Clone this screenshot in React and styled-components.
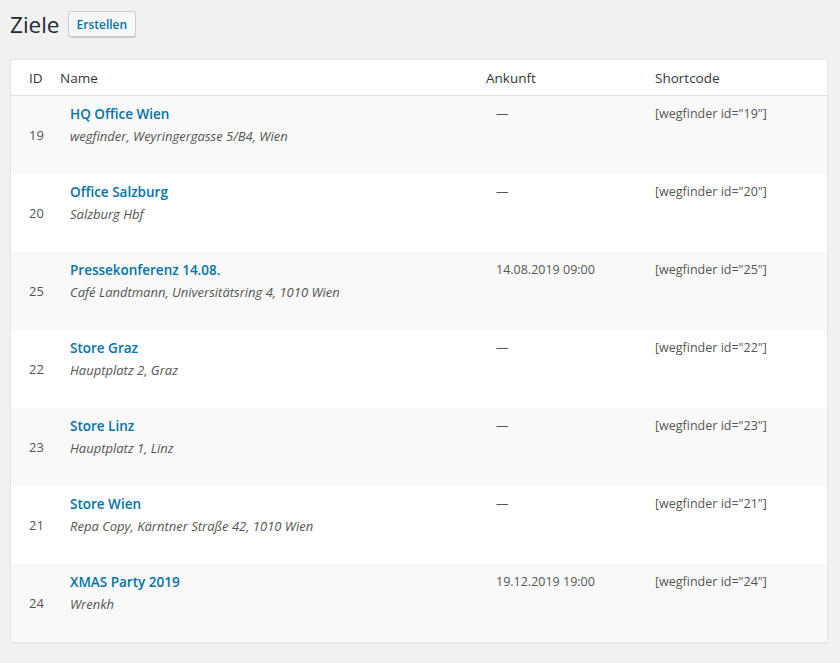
import styled, { createGlobalStyle } from "styled-components";

const rows = [
  { id: 19, name: "HQ Office Wien", place: "wegfinder, Weyringergasse 5/B4, Wien", arrival: "—" },
  { id: 20, name: "Office Salzburg", place: "Salzburg Hbf", arrival: "—" },
  { id: 25, name: "Pressekonferenz 14.08.", place: "Café Landtmann, Universitätsring 4, 1010 Wien", arrival: "14.08.2019 09:00" },
  { id: 22, name: "Store Graz", place: "Hauptplatz 2, Graz", arrival: "—" },
  { id: 23, name: "Store Linz", place: "Hauptplatz 1, Linz", arrival: "—" },
  { id: 21, name: "Store Wien", place: "Repa Copy, Kärntner Straße 42, 1010 Wien", arrival: "—" },
  { id: 24, name: "XMAS Party 2019", place: "Wrenkh", arrival: "19.12.2019 19:00" },
];

const App = () => {
  return (
    <>
      <Global />
      <Wrap>
        <Heading>
          <Title>Ziele</Title>
          <Button>Erstellen</Button>
        </Heading>
        <Table>
          <HeadRow>
            <HeadCell pad={18}>ID</HeadCell>
            <HeadCell>Name</HeadCell>
            <HeadCell>Ankunft</HeadCell>
            <HeadCell>Shortcode</HeadCell>
          </HeadRow>
          {rows.map((r, i) => (
            <Row key={r.id} striped={i % 2 === 0}>
              <IdCell>{r.id}</IdCell>
              <NameCell>
                <Link>{r.name}</Link>
                <Place>{r.place}</Place>
              </NameCell>
              <Cell pad={20}>{r.arrival}</Cell>
              <Cell>[wegfinder id="{r.id}"]</Cell>
            </Row>
          ))}
        </Table>
      </Wrap>
    </>
  );
};
export default App;

const Global = createGlobalStyle`
  body {
    margin: 0;
    background: #f1f1f1;
    font-family: "Open Sans", "Noto Sans", sans-serif;
    color: #444;
  }
`;

const Wrap = styled.div`
  padding: 0 12px 20px 10px;
`;

const Heading = styled.div`
  display: flex;
  align-items: center;
  gap: 8px;
  height: 48px;
  margin-bottom: 11px;
`;

const Title = styled.h1`
  margin: 0;
  font-size: 22.5px;
  font-weight: 400;
  color: #23282d;
  line-height: 29px;
`;

const Button = styled.button`
  height: 26px;
  padding: 0 8px;
  border: 1px solid #ccc;
  border-radius: 3px;
  background: #f7f7f7;
  box-shadow: 0 1px 0 #ccc;
  color: #0073aa;
  font-family: inherit;
  font-size: 12px;
  font-weight: 600;
  cursor: pointer;
`;

const Table = styled.div`
  background: #fff;
  border: 1px solid #e5e5e5;
  box-shadow: 0 1px 1px rgba(0, 0, 0, 0.04);
`;

const grid = `
  display: grid;
  grid-template-columns: 39px 426px 169px 1fr;
`;

const HeadRow = styled.div`
  ${grid}
  height: 35px;
  align-items: center;
  border-bottom: 1px solid #e1e1e1;
`;

const HeadCell = styled.div`
  padding-left: ${({ pad }) => pad || 10}px;
  font-size: 13.5px;
  color: #32373c;
`;

const Row = styled.div`
  ${grid}
  height: 78px;
  background: ${({ striped }) => (striped ? "#f9f9f9" : "#fff")};
`;

const Cell = styled.div`
  padding: 9px 0 0 ${({ pad }) => pad || 10}px;
  font-size: 12.5px;
  line-height: 18px;
  color: #555;
`;

const IdCell = styled.div`
  display: flex;
  align-items: center;
  padding-left: 18px;
  font-size: 13px;
  color: #555;
`;

const NameCell = styled.div`
  padding: 8px 0 0 20px;
`;

const Link = styled.div`
  font-size: 13.5px;
  font-weight: 600;
  line-height: 20px;
  color: #0073aa;
`;

const Place = styled.div`
  margin-top: 3px;
  font-size: 13px;
  font-style: italic;
  line-height: 18px;
  color: #555;
`;
